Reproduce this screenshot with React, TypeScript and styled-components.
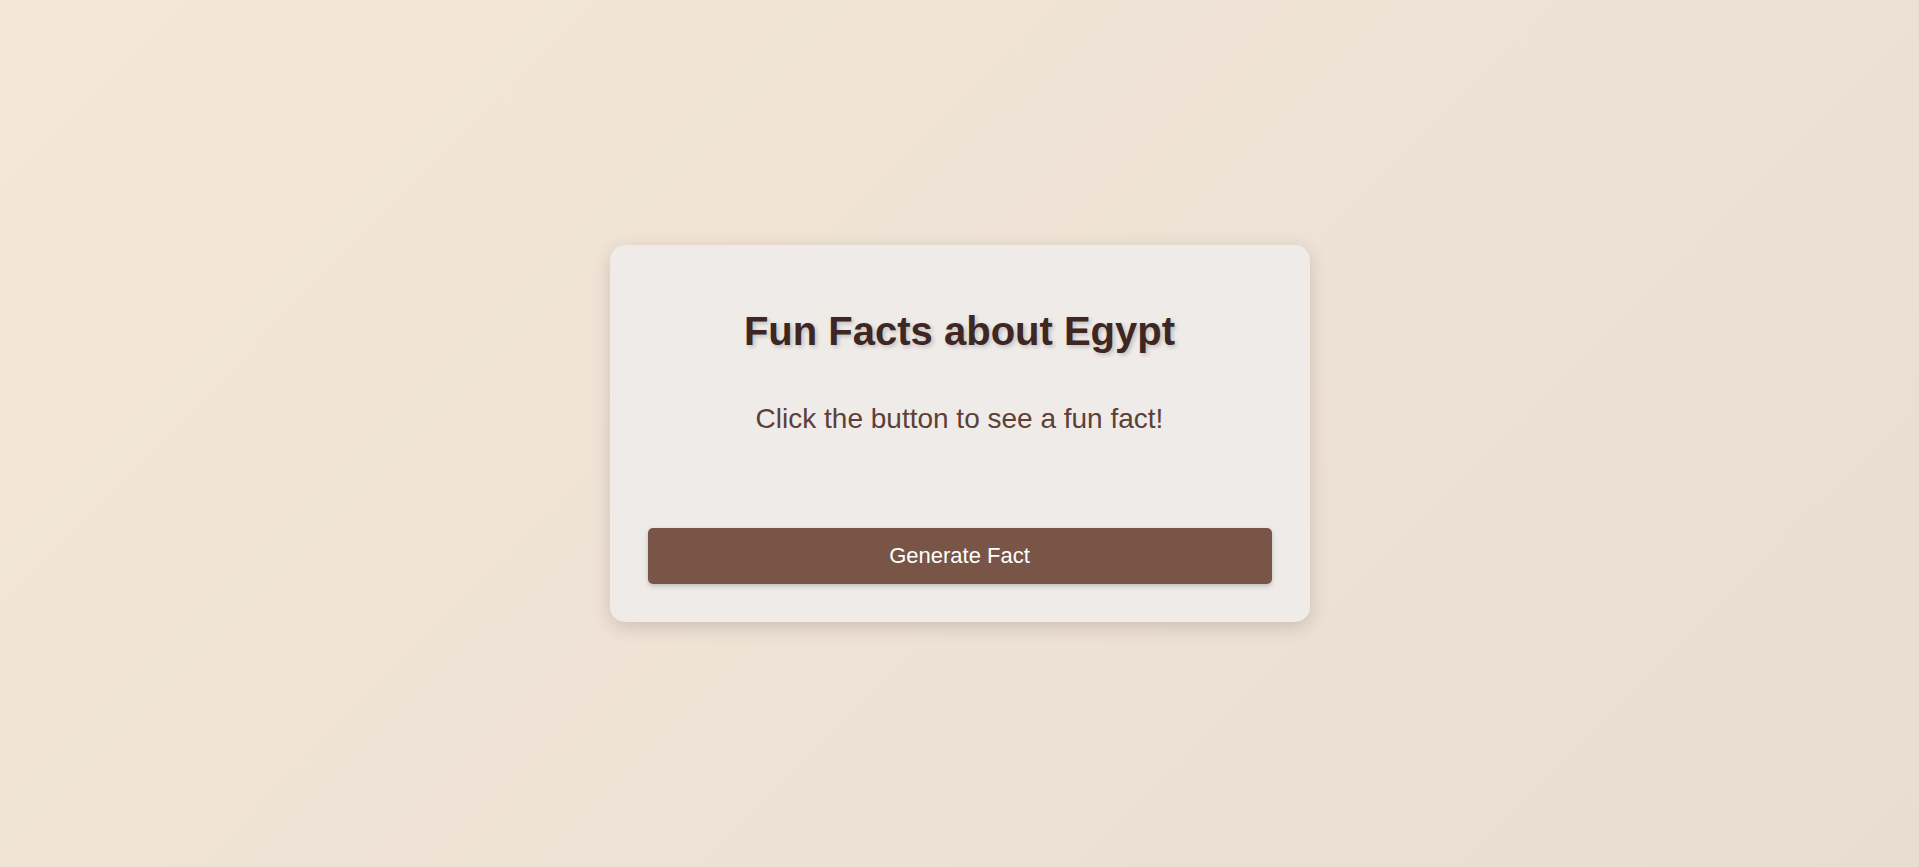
import styled, { createGlobalStyle } from "styled-components";

const GlobalStyle = createGlobalStyle`
  html, body {
    margin: 0;
    padding: 0;
  }
  body {
    font-family: "Liberation Sans", Arial, sans-serif;
    background: linear-gradient(135deg, #f4e7d9 0%, #e9ddd2 100%);
    min-height: 100vh;
  }
`;

const Page = styled.main`
  width: 100vw;
  height: 867px;
  display: flex;
  align-items: flex-start;
  justify-content: center;
  padding-top: 245px;
  box-sizing: border-box;
`;

const Card = styled.section`
  width: 700px;
  box-sizing: border-box;
  padding: 38px 38px 38px;
  background-color: #efebe9;
  border-radius: 15px;
  box-shadow: 0 5px 18px rgba(62, 39, 35, 0.18);
  display: flex;
  flex-direction: column;
  align-items: center;
`;

const Title = styled.h1`
  margin: 25px 0 0;
  font-size: 40px;
  line-height: 46px;
  font-weight: 700;
  color: #3e2723;
  text-shadow: 2px 2px 4px rgba(0, 0, 0, 0.2);
`;

const Fact = styled.p`
  margin: 49px 0 0;
  font-size: 28px;
  line-height: 32px;
  color: #5d4037;
  text-align: center;
`;

const Button = styled.button`
  margin-top: 93px;
  width: 100%;
  height: 56px;
  border: none;
  border-radius: 5px;
  background-color: #795548;
  color: #ffffff;
  font-family: "Liberation Sans", Arial, sans-serif;
  font-size: 22px;
  cursor: pointer;
  box-shadow: 0 2px 5px rgba(0, 0, 0, 0.2);
`;

const App = (): JSX.Element => {
  return (
    <>
      <GlobalStyle />
      <Page>
        <Card>
          <Title>Fun Facts about Egypt</Title>
          <Fact>Click the button to see a fun fact!</Fact>
          <Button>Generate Fact</Button>
        </Card>
      </Page>
    </>
  );
};

export default App;
